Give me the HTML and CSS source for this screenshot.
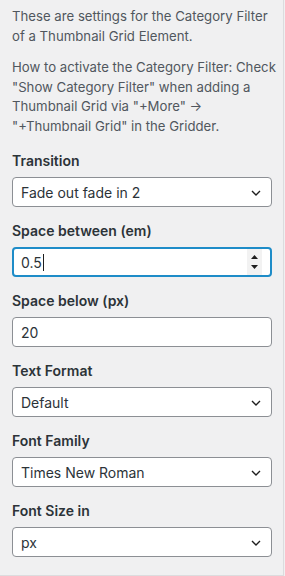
FILE: index.html
```html
<!DOCTYPE html>
<html lang="en">
<head>
  <meta charset="UTF-8">
  <meta name="viewport" content="width=device-width, initial-scale=1.0">
  <title>Category Filter Settings</title>
  <link rel="stylesheet" href="styles.css">
</head>
<body>
  <div class="panel">
    <p class="help">These are settings for the Category Filter of a Thumbnail Grid Element.</p>
    <p class="help">How to activate the Category Filter: Check "Show Category Filter" when adding a Thumbnail Grid via "+More" &rarr; "+Thumbnail Grid" in the Gridder.</p>

    <div class="field">
      <label>Transition</label>
      <div class="select-box">
        <span>Fade out fade in 2</span>
        <svg class="chevron" width="10" height="6" viewBox="0 0 10 6"><path d="M1 1l4 4 4-4" fill="none" stroke="#1e1e1e" stroke-width="1.4"/></svg>
      </div>
    </div>

    <div class="field">
      <label>Space between (em)</label>
      <div class="text-box focused">
        <span>0.5</span><span class="caret"></span>
        <div class="spinner">
          <svg width="7" height="4" viewBox="0 0 7 4"><path d="M0 4L3.5 0 7 4z" fill="#1e1e1e"/></svg>
          <svg width="7" height="4" viewBox="0 0 7 4"><path d="M0 0L3.5 4 7 0z" fill="#1e1e1e"/></svg>
        </div>
      </div>
    </div>

    <div class="field">
      <label>Space below (px)</label>
      <div class="text-box">
        <span>20</span>
      </div>
    </div>

    <div class="field">
      <label>Text Format</label>
      <div class="select-box">
        <span>Default</span>
        <svg class="chevron" width="10" height="6" viewBox="0 0 10 6"><path d="M1 1l4 4 4-4" fill="none" stroke="#1e1e1e" stroke-width="1.4"/></svg>
      </div>
    </div>

    <div class="field">
      <label>Font Family</label>
      <div class="select-box">
        <span>Times New Roman</span>
        <svg class="chevron" width="10" height="6" viewBox="0 0 10 6"><path d="M1 1l4 4 4-4" fill="none" stroke="#1e1e1e" stroke-width="1.4"/></svg>
      </div>
    </div>

    <div class="field">
      <label>Font Size in</label>
      <div class="select-box">
        <span>px</span>
        <svg class="chevron" width="10" height="6" viewBox="0 0 10 6"><path d="M1 1l4 4 4-4" fill="none" stroke="#1e1e1e" stroke-width="1.4"/></svg>
      </div>
    </div>
  </div>
</body>
</html>
```

FILE: styles.css
```css
* {
  margin: 0;
  padding: 0;
  box-sizing: border-box;
  font-family: 'Inter', 'Liberation Sans', sans-serif;
}

body {
  background: #f0f0f1;
  width: 285px;
  height: 576px;
  overflow: hidden;
}

.panel {
  width: 284px;
  height: 576px;
  padding: 7px 11px 0 12px;
  border-right: 1px solid #dcdcde;
  border-bottom: 1px solid #dcdcde;
}

.help {
  font-size: 13.2px;
  line-height: 19.5px;
  color: #50575e;
  margin-right: -9px;
  margin-bottom: 12px;
}

.help + .help {
  margin-bottom: 16px;
}

.field {
  margin-bottom: 15px;
}

.field label {
  display: block;
  font-size: 14px;
  line-height: 18px;
  font-weight: 600;
  color: #2c3338;
  margin-bottom: 7px;
}

.select-box,
.text-box {
  display: flex;
  align-items: center;
  height: 30px;
  background: #fff;
  border: 1px solid #8c8f94;
  border-radius: 4px;
  padding: 0 10px 0 8px;
  font-size: 14px;
  color: #2c3338;
}

.select-box span {
  flex: 1;
}

.chevron {
  margin-top: 1px;
}

.text-box.focused {
  border: 2px solid #1e8cc8;
  padding: 0 8px 0 7px;
}

.caret {
  width: 1px;
  height: 17px;
  background: #1e1e1e;
  margin-left: 1px;
}

.spinner {
  margin-left: auto;
  height: 26px;
  width: 15px;
  background: #f2f2f2;
  display: flex;
  flex-direction: column;
  align-items: center;
  justify-content: space-around;
  padding: 3px 0;
}
```
